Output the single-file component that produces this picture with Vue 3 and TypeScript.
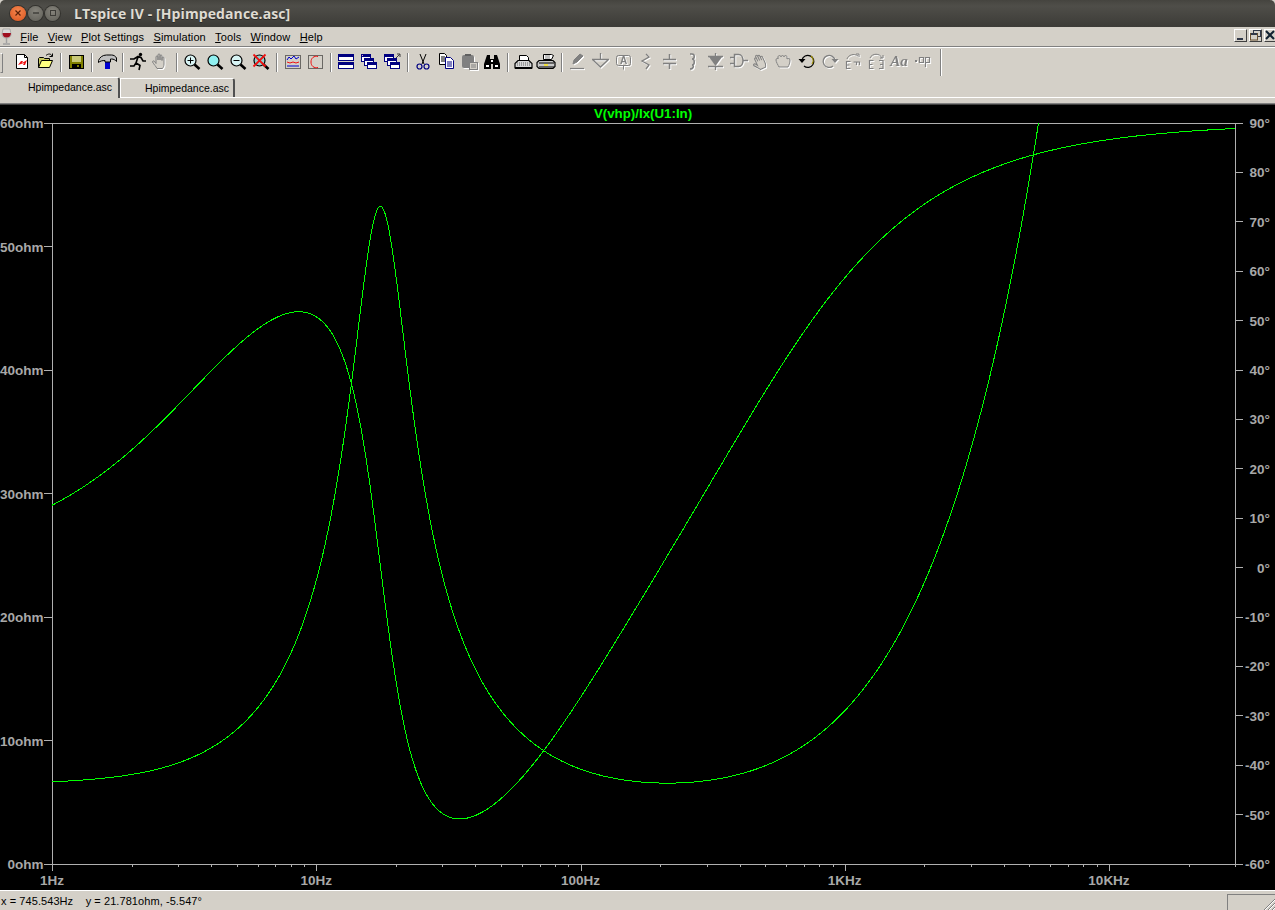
<script setup lang="ts">
import { computed } from 'vue'

const menus = [
  ['F', 'ile'],
  ['V', 'iew'],
  ['P', 'lot Settings'],
  ['S', 'imulation'],
  ['T', 'ools'],
  ['W', 'indow'],
  ['H', 'elp']
]

const zoomLens = (fill: string, extra = '') =>
  `<path d="M12.5 13.5l5 4.5" stroke="#000" stroke-width="2.6"/><circle cx="8.5" cy="9.5" r="5.5" fill="${fill}" stroke="#000" stroke-width="1.2"/>${extra}`

const paneBar = (x: number, y: number, w: number, h: number) =>
  `<rect x="${x + 0.5}" y="${y + 0.5}" width="${w}" height="${h}" fill="#fff" stroke="#000080"/><rect x="${x}" y="${y}" width="${w + 1}" height="3" fill="#000080"/>`

const handPath =
  'M6 17.5c-1-2-3-4-4.500-6.500 0-1.500 2-1.500 2.500 0l1 1.500V6c0-1.500 2-1.500 2 0v3-5c0-1.500 2-1.500 2 0v5-4c0-1.500 2-1.500 2 0v4.500-2.500c0-1.500 2-1.500 2 0V13c0 2-.5 3-1.500 4.500z'

const icons: Record<string, string> = {
  new: '<path d="M4.500 3.500h8l3 3v11h-11z" fill="#fff" stroke="#000"/><path d="M12.500 3.500v3h3" fill="none" stroke="#000"/><path d="M6 14l3-4h2l-1 2 5-3-2 5h-2l1-2z" fill="#f01010"/>',
  open: '<path d="M3.500 16.500v-9l1-1h4l1 1h5v2" fill="#c8c860" stroke="#000"/><path d="M3.500 16.500l3-7h11l-3 7z" fill="#ffff80" stroke="#000"/><path d="M11 4.500c2-2 5-2 6 .5M17.500 2.500v3h-3" stroke="#000" fill="none"/>',
  save: '<rect x="3.500" y="4.500" width="14" height="13" fill="#808000" stroke="#000"/><rect x="6" y="5" width="9" height="6" fill="#c8c878"/><rect x="6" y="13" width="9" height="4" fill="#000"/><rect x="11" y="14" width="2" height="2" fill="#808000"/>',
  hammer: '<rect x="8" y="11" width="5" height="7" fill="#0000d0"/><path d="M1.500 9.500c1-3 4-5.500 8-5.500h5c2 0 4 1 5 3v3.500c-1-1.500-3-2.500-5-2.500h-1v3H8V9.500c-2.500 0-5 .5-6.500 2z" fill="#c0c0c0" stroke="#000"/>',
  run: '<circle cx="12.500" cy="3.500" r="1.700"/><path d="M2 8h4l4-2.500 3 1 2 3.500h3M10 6l-2 6 4 2.500-1 4.500M8 12l-2 3H2" stroke="#000" stroke-width="1.600" fill="none"/>',
  hand: `<path d="${handPath}" fill="#d4d0c8" stroke="#808080"/>`,
  zoomIn: zoomLens('#d8f4f4', '<path d="M5.500 9.500h6M8.500 6.500v6" stroke="#000" fill="none"/>'),
  zoomFit: zoomLens('#90f0f0'),
  zoomOut: zoomLens('#d8f4f4', '<path d="M5.500 9.500h6" stroke="#000" fill="none"/>'),
  zoomCancel: zoomLens('#90d0d0', '<path d="M2.500 3.500l12 12M14.500 3.500l-12 12" stroke="#f01010" stroke-width="1.800" fill="none"/>'),
  graph: '<rect x="3.500" y="4.500" width="15" height="13" fill="none" stroke="#000" stroke-dasharray="1 1"/><path d="M5 9l2-3 2 2 3-3 2 3 3-2" stroke="#0000d0" fill="none"/><path d="M5 11l3 1 3-1 3 1 3-1" stroke="#f01010" fill="none"/><path d="M5 15h12" stroke="#0000d0" fill="none"/>',
  autorange: '<rect x="3.500" y="4.500" width="14" height="13" fill="none" stroke="#000" stroke-dasharray="1 1"/><path d="M13 5.500c-4-1-7 1.500-7 5.500s3 6.500 7 5.500" stroke="#f01010" fill="none"/>',
  tile: paneBar(2, 3, 15, 6) + paneBar(2, 11, 15, 6),
  cascade: paneBar(2, 3, 9, 7) + paneBar(5, 7, 9, 7) + paneBar(8, 11, 9, 6) + '<rect x="3" y="4" width="1" height="1" fill="#f0a0d0"/>',
  windows: paneBar(2, 3, 9, 7) + paneBar(5, 7, 9, 7) + paneBar(8, 11, 9, 6) + '<path d="M14 7l4-4M15 3h3v3" stroke="#404040" fill="none"/>',
  cut: '<path d="M7 3l4 10M13 3L9 13" stroke="#000" fill="none"/><circle cx="6.500" cy="15.500" r="2.500" fill="none" stroke="#000080" stroke-width="1.200"/><circle cx="13.500" cy="15.500" r="2.500" fill="none" stroke="#000080" stroke-width="1.200"/>',
  copy: '<path d="M3.500 2.500h5l2 2v9h-7z" fill="#fff" stroke="#000"/><path d="M5 6h4M5 8h4M5 10h4" stroke="#000"/><path d="M9.500 6.500h5l3 3v8h-8z" fill="#fff" stroke="#000080"/><path d="M11 11h5M11 13h5M11 15h5" stroke="#000080"/>',
  paste: '<rect x="3" y="4" width="12" height="13" rx="2" fill="#808080"/><rect x="6" y="3" width="6" height="2" fill="#606060"/><rect x="10.500" y="11.500" width="8" height="7" fill="#d4d0c8" stroke="#808080"/><path d="M12 14h5M12 16h5" stroke="#808080"/>',
  find: '<path d="M5 4h3v4h4V4h3l3 9v5h-7v-5H9v5H2v-5z" fill="#000"/><rect x="4" y="14" width="3" height="2" fill="#fff"/><rect x="13" y="14" width="3" height="2" fill="#fff"/><rect x="9" y="9" width="2" height="2" fill="#fff"/>',
  printSetup: '<path d="M6.500 4.500h7l2 2v3h-9z" fill="#fff" stroke="#000"/><path d="M5 9.500h11l3 3v4.500H2v-4.500z" fill="#d8d8d8" stroke="#000" stroke-width="1.200"/><path d="M4 12h14M4 14h14" stroke="#606060" stroke-dasharray="1 1"/><rect x="2" y="16" width="17" height="2"/>',
  print: '<path d="M7.500 3.500h8l2 1-2 4h-8z" fill="#fff" stroke="#000"/><path d="M9 5h5M9 7h5" stroke="#808080"/><path d="M3 9.500h14l2 2v4l-2 2H3l-2-2v-4z" fill="#c8c8c8" stroke="#000" stroke-width="1.200"/><path d="M3 12h15M3 16h15" stroke="#000"/><rect x="8" y="13" width="4" height="2" fill="#f0e040"/>',
  wire: '<path d="M6 13l1-4 6-6 3 2-6 6z" fill="#808080" stroke="#808080"/><path d="M3 17.500h14" stroke="#808080" stroke-width="1.200"/>',
  ground: '<path d="M10.500 2v6M2 8.500h17M3 9l7.500 7L18 9" stroke="#808080" stroke-width="1.300" fill="none"/>',
  label: '<rect x="3.500" y="4.500" width="14" height="10" rx="2" fill="none" stroke="#808080"/><path d="M10.500 14.500v4" stroke="#808080"/><text x="10.500" y="13" font-size="10" text-anchor="middle" fill="#808080" font-family="Liberation Sans, sans-serif" font-weight="700">A</text>',
  resistor: '<path d="M10 3l3 3-7 4 7 4-3 4" stroke="#808080" stroke-width="1.300" fill="none"/>',
  capacitor: '<path d="M10.500 3v5M4 8.500h13M4 12.500h13M10.500 13v5" stroke="#808080" stroke-width="1.500" fill="none"/>',
  inductor: '<path d="M8 3h2c3 0 3 5 0 5 3 0 3 6 0 6 2 0 2 4-2 4" stroke="#808080" stroke-width="1.500" fill="none"/>',
  diode: '<path d="M10.500 2v3M3 5.500h15M10.500 15v4M3 15.500h15" stroke="#808080" stroke-width="1.300" fill="none"/><path d="M4 6h13l-6.500 9z" fill="#808080"/>',
  gate: '<path d="M6.500 3.500h4c6 0 6 12 0 12h-4z" fill="none" stroke="#808080" stroke-width="1.500"/><path d="M2 6.500h4M2 12.500h4M15 9.500h5" stroke="#808080" stroke-width="1.300"/>',
  handOpen: `<path d="${handPath}" transform="rotate(-25 10 10)" fill="#d4d0c8" stroke="#808080"/>`,
  handGrab: '<path d="M5 16c-1-2-3-5-3-7 0-2 2-2 2-1V6c0-2 3-2 3 0 0-2 3-2 3 0 0-2 3-2 3 0v2c1-1 3-1 3 1 0 3-1 5-2 7z" fill="#d4d0c8" stroke="#808080"/>',
  undo: '<path d="M5 9a6 6 0 1 1 2 6" fill="none" stroke="#000" stroke-width="1.200"/><path d="M14 5a6 6 0 0 1 1 8" fill="none" stroke="#a09000" stroke-width="1.200"/><path d="M1.500 8h7L5 12z" fill="#000"/>',
  redo: '<path d="M15 9a6 6 0 1 0-2 6" fill="none" stroke="#808080" stroke-width="1.300"/><path d="M11.500 8h7L15 12z" fill="#808080"/>',
  rotate: '<path d="M7.500 10.500h-4v7h4M3.500 14h3M10.500 11h6v3M13.500 11v3" stroke="#808080" stroke-width="1.200" fill="none"/><path d="M4 8c1-4 7-6 11-3" stroke="#808080" fill="none"/><path d="M13 3h3v3" stroke="#808080" fill="none"/>',
  mirror: '<path d="M7.500 9.500h-4v8h4M3.500 13.500h3M13 9.500h4v8h-4M17 13.500h-3" stroke="#808080" stroke-width="1.200" fill="none"/><path d="M4 7c2-5 10-5 12 0" stroke="#808080" fill="none"/><path d="M14 7h3V4" stroke="#808080" fill="none"/>',
  text: '<text x="10" y="15" font-size="15" text-anchor="middle" fill="#808080" font-family="Liberation Serif, serif" font-style="italic" font-weight="700">Aa</text>',
  op: '<rect x="3" y="9" width="2" height="2" fill="#808080"/><path d="M7.500 6.500h4v5h-4zM13.500 16V6.500h4v5h-4" stroke="#808080" stroke-width="1.200" fill="none"/>'
}

// null marks a separator between button groups
const toolbar: (string | null)[] = [
  'new', 'open', null, 'save', null, 'hammer', null, 'run', 'hand', null,
  'zoomIn', 'zoomFit', 'zoomOut', 'zoomCancel', null, 'graph', 'autorange', null,
  'tile', 'cascade', 'windows', null, 'cut', 'copy', 'paste', 'find', null,
  'printSetup', 'print', null, 'wire', 'ground', 'label', 'resistor', 'capacitor',
  'inductor', 'diode', 'gate', 'handOpen', 'handGrab', 'undo', 'redo', 'rotate',
  'mirror', 'text', 'op'
]

const disabled = new Set([
  'hand', 'paste', 'wire', 'ground', 'label', 'resistor', 'capacitor', 'inductor',
  'diode', 'gate', 'handOpen', 'handGrab', 'redo', 'rotate', 'mirror', 'text', 'op'
])

// plot frame, in page pixels
const left = 52
const right = 1235
const top = 123
const bottom = 864
const decade = 264.25

const ohmLabels = [60, 50, 40, 30, 20, 10, 0].map((v, i) => ({
  text: `${v}ohm`,
  y: top + (i * (bottom - top)) / 6
}))

const degLabels = Array.from({ length: 16 }, (_, i) => ({
  text: `${90 - i * 10}°`,
  y: top + (i * (bottom - top)) / 15
}))

const freqLabels = ['1Hz', '10Hz', '100Hz', '1KHz', '10KHz'].map((text, i) => ({
  text,
  x: left + i * decade
}))

const freqTicks = computed(() => {
  const ticks: { x: number; major: boolean }[] = []
  for (let d = 0; d < 5; d++) {
    for (let m = 1; m < 10; m++) {
      const x = left + (d + Math.log10(m)) * decade
      if (x <= right + 1) ticks.push({ x: Math.round(x) + 0.5, major: m === 1 })
    }
  }
  return ticks
})

// driver model: Re + jwLe in series with a parallel Rp, Lp, C tank
const Re = 6.45
const Le = 1.757e-3
const Rp = 46.8
const Lp = 0.229
const Cp = 361e-6

function impedance(freq: number): { ohm: number; deg: number } {
  const w = 2 * Math.PI * freq
  const g = 1 / Rp
  const b = w * Cp - 1 / (w * Lp)
  const den = g * g + b * b
  const re = Re + g / den
  const im = w * Le - b / den
  return { ohm: Math.hypot(re, im), deg: (Math.atan2(im, re) * 180) / Math.PI }
}

function tracePath(yOf: (freq: number) => number): string {
  let d = ''
  for (let x = left; x <= right; x += 0.5) {
    const y = yOf(10 ** ((x - left) / decade))
    if (y < top) break
    d += `${d ? 'L' : 'M'}${x} ${y.toFixed(2)}`
  }
  return d
}

const magnitudePath = computed(() => tracePath((f) => bottom - (impedance(f).ohm * (bottom - top)) / 60))
const phasePath = computed(() => tracePath((f) => top + ((90 - impedance(f).deg) * (bottom - top)) / 150))
</script>

<template>
  <div class="window">
    <!-- Title bar -->
    <header class="titlebar">
      <div class="lights">
        <span class="light close">
          <svg width="8" height="8" viewBox="0 0 8 8"><path d="M1.500 1.500l5 5M6.500 1.500l-5 5" stroke="#5a2008" stroke-width="1.200" /></svg>
        </span>
        <span class="light">
          <svg width="8" height="8" viewBox="0 0 8 8"><path d="M1 4h6" stroke="#3c3b37" stroke-width="1.400" /></svg>
        </span>
        <span class="light">
          <svg width="8" height="8" viewBox="0 0 8 8"><rect x="1.500" y="1.500" width="5" height="5" fill="none" stroke="#3c3b37" /></svg>
        </span>
      </div>
      <span class="title">LTspice IV - [Hpimpedance.asc]</span>
    </header>

    <!-- Menu bar -->
    <nav class="menubar">
      <svg class="wine" width="14" height="17" viewBox="0 0 14 17">
        <path d="M3 1h7l1 5c0 3-2 4-4.500 4S2 9 2 6z" fill="#d8d8d8" stroke="#909090" stroke-width="0.600" />
        <path d="M2.500 5h8.500c0 3-2 4.500-4.500 4.500S2.500 8 2.500 5z" fill="#a01020" />
        <path d="M6.500 10v5M3 16h7" stroke="#a0a0a0" stroke-width="1.400" />
      </svg>
      <span v-for="m in menus" :key="m[0]" class="menu"><u>{{ m[0] }}</u>{{ m[1] }}</span>
      <div class="mdi-buttons">
        <span class="mdi">
          <svg width="11" height="11" viewBox="0 0 11 11"><rect x="2" y="8" width="6" height="2" fill="#303848" /></svg>
        </span>
        <span class="mdi">
          <svg width="11" height="11" viewBox="0 0 11 11">
            <rect x="3.500" y="0.500" width="7" height="6" fill="none" stroke="#303848" />
            <rect x="0.500" y="3.500" width="7" height="6.500" fill="#d4d0c8" stroke="#6a5030" />
            <rect x="1" y="3" width="6" height="2" fill="#303848" />
          </svg>
        </span>
        <span class="mdi">
          <svg width="11" height="11" viewBox="0 0 11 11"><path d="M1 1l8 8M9 1L1 9" stroke="#102030" stroke-width="2" /></svg>
        </span>
      </div>
    </nav>

    <!-- Toolbar -->
    <div class="toolbar">
      <span class="grip"></span>
      <template v-for="(item, i) in toolbar" :key="i">
        <span v-if="item === null" class="sep"></span>
        <span v-else class="tool" :class="{ off: disabled.has(item) }">
          <svg width="21" height="20" viewBox="0 0 21 20" v-html="icons[item]"></svg>
        </span>
      </template>
      <span class="sep end"></span>
    </div>

    <!-- Document tabs -->
    <div class="tabs">
      <span class="tab active">Hpimpedance.asc</span>
      <span class="tab">Hpimpedance.asc</span>
    </div>
    <div class="tabs-gap"></div>

    <!-- Plot pane -->
    <main class="plot">
      <svg width="1275" height="785" viewBox="0 105 1275 785">
        <text class="trace-name" x="643" y="118">V(vhp)/Ix(U1:In)</text>

        <g class="axis">
          <path :d="`M${left + 0.5} ${top}V${bottom + 1}M${right + 0.5} ${top}V${bottom + 1}`" />
          <path :d="`M44 ${top + 0.5}H1243M${left} ${bottom + 0.5}H${right + 1}`" />
          <path v-for="l in ohmLabels" :key="l.text" :d="`M44 ${Math.floor(l.y) + 0.5}H${left}`" />
          <path v-for="l in degLabels" :key="l.text" :d="`M${right} ${Math.floor(l.y) + 0.5}H1243`" />
          <path v-for="t in freqTicks" :key="t.x" :d="`M${t.x} ${bottom}V${t.major ? 871 : 867}`" />
        </g>

        <text v-for="l in ohmLabels" :key="l.text" class="label" text-anchor="end" x="43.500" :y="l.y + 5">{{ l.text }}</text>
        <text v-for="l in degLabels" :key="l.text" class="label" text-anchor="end" x="1270" :y="l.y + 5">{{ l.text }}</text>
        <text v-for="l in freqLabels" :key="l.text" class="label" text-anchor="middle" :x="l.x" y="885">{{ l.text }}</text>

        <path class="trace" :d="magnitudePath" />
        <path class="trace" :d="phasePath" />
      </svg>
    </main>

    <!-- Status bar -->
    <footer class="statusbar">
      <span class="status-text">x = 745.543Hz&nbsp;&nbsp;&nbsp;&nbsp;y = 21.781ohm, -5.547°</span>
      <span class="status-panel">
        <svg class="resize" width="12" height="12" viewBox="0 0 12 12">
          <path d="M12 1L1 12M12 5l-7 7M12 9l-3 3" stroke="#808080" />
          <path d="M12 2L2 12M12 6l-6 6M12 10l-2 2" stroke="#fff" />
        </svg>
      </span>
    </footer>
  </div>
</template>

<style>
html,
body {
  margin: 0;
  background: #d4d0c8;
  overflow: hidden;
}
</style>

<style scoped>
.window {
  width: 1275px;
  height: 910px;
  display: flex;
  flex-direction: column;
  overflow: hidden;
  background: #d4d0c8;
  color: #000;
  font-family: 'Liberation Sans', Arial, sans-serif;
  font-size: 11px;
}

/* Title bar */
.titlebar {
  height: 27px;
  flex: none;
  display: flex;
  align-items: center;
  background: linear-gradient(180deg, #45443f 0%, #4f4e49 22%, #3c3b37 100%);
  border-radius: 5px 5px 0 0;
}

.lights {
  display: flex;
  gap: 2px;
  padding-left: 10px;
  width: 65px;
  box-sizing: border-box;
}

.light {
  width: 15px;
  height: 15px;
  margin-top: -1px;
  border-radius: 50%;
  display: flex;
  align-items: center;
  justify-content: center;
  background: radial-gradient(circle at 50% 35%, #85837b, #5f5e57);
  box-shadow: 0 0 0 1px #33322e;
}

.light.close {
  width: 16px;
  background: radial-gradient(circle at 50% 35%, #f5874f, #d9541e);
}

.title {
  margin-left: 9px;
  color: #dfdbd2;
  font-family: 'Open Sans', 'Noto Sans', sans-serif;
  font-size: 14px;
  font-weight: 700;
  letter-spacing: 0.1px;
  text-shadow: 0 1px 0 #2a2a27;
  white-space: nowrap;
}

/* Menu bar */
.menubar {
  height: 19px;
  flex: none;
  display: flex;
  align-items: center;
  gap: 9.3px;
  border-bottom: 1px solid #808080;
}

.wine {
  margin-right: -3px;
}

.menu {
  margin-top: 1px;
  white-space: nowrap;
  letter-spacing: 0.1px;
}

.mdi-buttons {
  margin-left: auto;
  margin-right: -2px;
  margin-top: -2px;
  display: flex;
  gap: 2px;
}

.mdi {
  width: 13px;
  height: 13px;
  box-sizing: border-box;
  display: flex;
  align-items: center;
  justify-content: center;
  border: 1px solid;
  border-color: #fff #404040 #404040 #fff;
}

/* Toolbar */
.toolbar {
  height: 31px;
  flex: none;
  box-sizing: border-box;
  border-top: 1px solid #fff;
  display: flex;
  align-items: flex-start;
  padding-top: 3px;
}

.grip {
  width: 3px;
  height: 20px;
  margin-top: 2px;
  margin-right: 8px;
  border: 1px solid;
  border-color: #fff #808080 #808080 transparent;
  box-sizing: border-box;
}

.tool {
  width: 23px;
  height: 20px;
  flex: none;
  display: flex;
  justify-content: center;
}

.tool svg {
  display: block;
  overflow: visible;
}

.tool.off svg {
  filter: drop-shadow(1px 1px 0 #fff);
}

.sep {
  width: 8px;
  height: 19px;
  flex: none;
  margin-top: 2px;
  position: relative;
}

.sep::before {
  content: '';
  position: absolute;
  left: 3px;
  top: 0;
  bottom: 0;
  width: 1px;
  background: #808080;
  box-shadow: 1px 0 0 #fff;
}

.sep.end {
  height: 27px;
  margin-top: -2px;
  margin-left: 3px;
}

/* Tabs */
.tabs {
  height: 19px;
  flex: none;
  display: flex;
  align-items: flex-end;
  border-bottom: 1px solid #fff;
  font-size: 10.5px;
}

.tab {
  width: 115px;
  height: 19px;
  box-sizing: border-box;
  padding-left: 24px;
  line-height: 18px;
  border-top: 1px solid #fff;
  border-left: 1px solid #fff;
  border-right: 2px solid #505050;
  border-radius: 0 3px 0 0;
}

.tab.active {
  width: 120px;
  height: 21px;
  margin-bottom: -1px;
  padding-left: 28px;
  line-height: 19px;
  background: #d4d0c8;
  border-left: none;
  position: relative;
}

.tabs-gap {
  height: 5px;
  flex: none;
  border-bottom: 1px solid #808080;
}

/* Plot */
.plot {
  height: 785px;
  flex: none;
  background: #000;
  border-top: 1px solid #404040;
}

.plot svg {
  display: block;
}

.axis path {
  fill: none;
  stroke: #b0b0b0;
  stroke-width: 1;
  shape-rendering: crispEdges;
}

.label {
  fill: #a8a8a8;
  font-size: 13.5px;
  font-weight: 700;
}

.trace-name {
  fill: #00ff00;
  font-size: 13.3px;
  font-weight: 700;
  text-anchor: middle;
}

.trace {
  fill: none;
  stroke: #00ff00;
  stroke-width: 1;
  shape-rendering: crispEdges;
}

/* Status bar */
.statusbar {
  height: 20px;
  flex: none;
  box-sizing: border-box;
  border-top: 1px solid #fff;
  display: flex;
  justify-content: space-between;
  align-items: flex-end;
}

.status-text {
  padding-left: 1px;
  line-height: 17px;
  letter-spacing: 0.07px;
}

.status-panel {
  width: 48px;
  height: 16px;
  box-sizing: border-box;
  border-top: 1px solid #808080;
  border-left: 1px solid #808080;
  position: relative;
}

.resize {
  position: absolute;
  right: 0;
  bottom: 0;
}
</style>
